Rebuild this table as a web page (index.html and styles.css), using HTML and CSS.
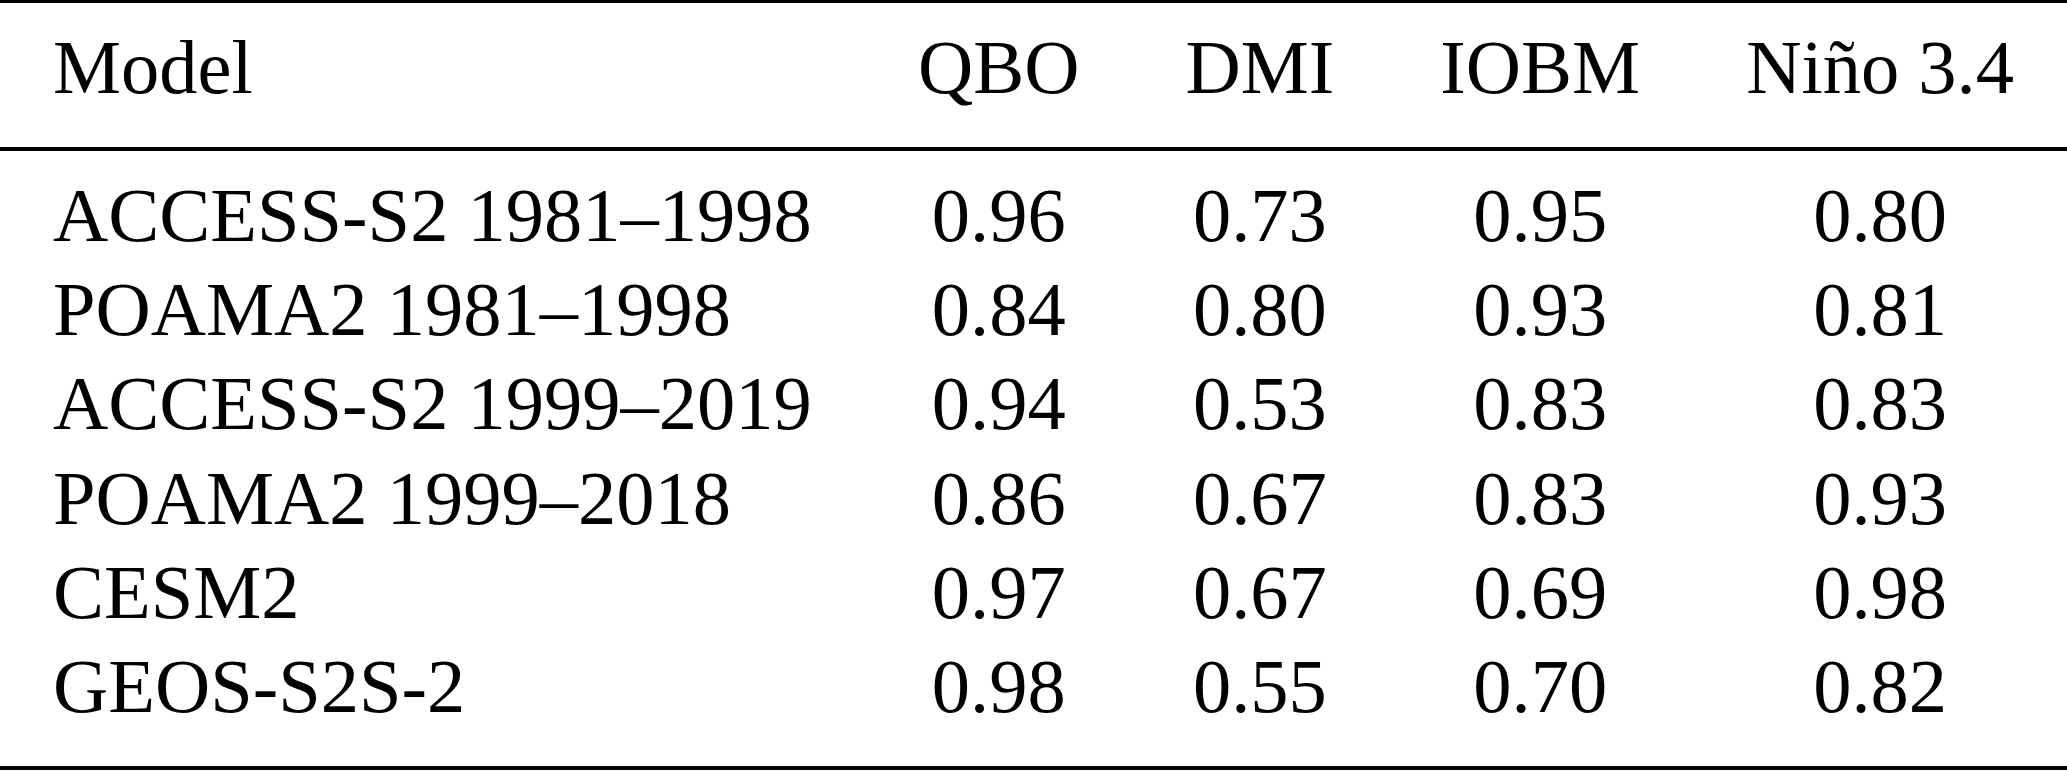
FILE: index.html
```html
<!DOCTYPE html>
<html lang="en">
<head>
<meta charset="utf-8">
<title>Model correlations</title>
<link rel="stylesheet" href="styles.css">
</head>
<body>
<div class="tbl">
  <table class="data">
    <thead>
      <tr>
        <th class="name">Model</th>
        <th>QBO</th>
        <th>DMI</th>
        <th>IOBM</th>
        <th>Niño 3.4</th>
      </tr>
    </thead>
    <tbody>
      <tr class="first"><td class="name">ACCESS-S2 1981–1998</td><td>0.96</td><td>0.73</td><td>0.95</td><td>0.80</td></tr>
      <tr><td class="name">POAMA2 1981–1998</td><td>0.84</td><td>0.80</td><td>0.93</td><td>0.81</td></tr>
      <tr><td class="name">ACCESS-S2 1999–2019</td><td>0.94</td><td>0.53</td><td>0.83</td><td>0.83</td></tr>
      <tr><td class="name">POAMA2 1999–2018</td><td>0.86</td><td>0.67</td><td>0.83</td><td>0.93</td></tr>
      <tr><td class="name">CESM2</td><td>0.97</td><td>0.67</td><td>0.69</td><td>0.98</td></tr>
      <tr class="last"><td class="name">GEOS-S2S-2</td><td>0.98</td><td>0.55</td><td>0.70</td><td>0.82</td></tr>
    </tbody>
  </table>
</div>
</body>
</html>
```

FILE: styles.css
```css
html, body {
  margin: 0;
  padding: 0;
  background: #ffffff;
}

body {
  font-family: "Liberation Serif", "Times New Roman", serif;
  font-size: 76.5px;
  color: #000000;
}

.tbl {
  width: 2067px;
  border-top: 3px solid #000;
  border-bottom: 4px solid #000;
}

.data {
  width: 100%;
  border-collapse: separate;
  border-spacing: 0;
}

.data th,
.data td {
  padding: 0 53px;
  line-height: 94.3px;
  font-weight: normal;
  text-align: center;
  white-space: nowrap;
  vertical-align: top;
}

.data th {
  padding-top: 18.3px;
  padding-bottom: 31.1px;
  border-bottom: 4px solid #000;
}

.data .name {
  text-align: left;
}

.data tr.first td {
  padding-top: 18px;
}

.data tr.last td {
  padding-bottom: 31.5px;
}
```
